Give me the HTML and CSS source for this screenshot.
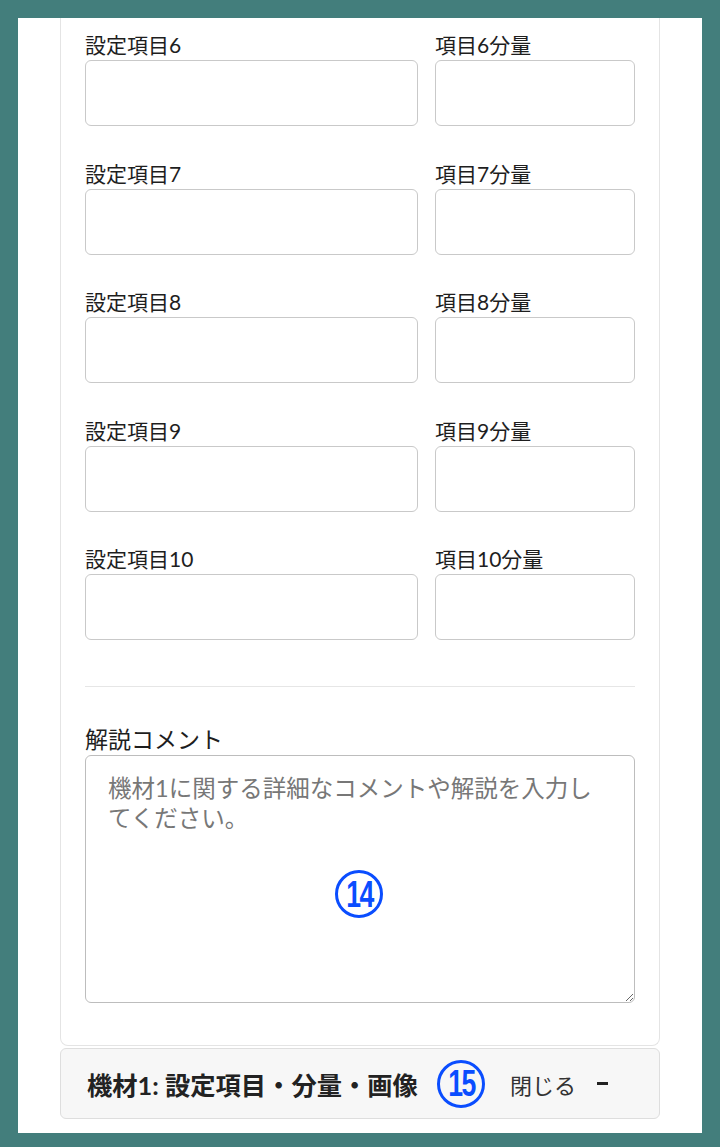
FILE: index.html
```html
<!DOCTYPE html>
<html lang="ja">
<head>
    <meta charset="UTF-8">
    <meta name="viewport" content="width=device-width, initial-scale=1.0">
    <title>機材1: 設定項目・分量・画像</title>
    <link rel="stylesheet" href="styles.css">
</head>
<body>

<div class="frame">
    <div class="panel">
        <div class="fields">
            <div class="field">
                <label>設定項目6</label>
                <input type="text">
            </div>
            <div class="field">
                <label>項目6分量</label>
                <input type="text">
            </div>
            <div class="field">
                <label>設定項目7</label>
                <input type="text">
            </div>
            <div class="field">
                <label>項目7分量</label>
                <input type="text">
            </div>
            <div class="field">
                <label>設定項目8</label>
                <input type="text">
            </div>
            <div class="field">
                <label>項目8分量</label>
                <input type="text">
            </div>
            <div class="field">
                <label>設定項目9</label>
                <input type="text">
            </div>
            <div class="field">
                <label>項目9分量</label>
                <input type="text">
            </div>
            <div class="field">
                <label>設定項目10</label>
                <input type="text">
            </div>
            <div class="field">
                <label>項目10分量</label>
                <input type="text">
            </div>
        </div>

        <hr class="divider">

        <div class="comment">
            <label class="comment-label">解説コメント</label>
            <div class="comment-box">
                <textarea placeholder="機材1に関する詳細なコメントや解説を入力してください。"></textarea>
                <span class="marker marker-14"><span>14</span></span>
            </div>
        </div>
    </div>

    <div class="accordion-header">
        <span class="accordion-title">機材1: 設定項目・分量・画像</span>
        <span class="marker"><span>15</span></span>
        <span class="accordion-toggle">閉じる</span>
        <span class="accordion-icon"></span>
    </div>
</div>

</body>
</html>
```

FILE: styles.css
```css
body {
    margin: 0;
    padding: 18px;
    background-color: #437e7c;
    font-family: Lato, "Noto Sans CJK JP", sans-serif;
    color: #222;
}

.frame {
    background: #fff;
    height: 1115px;
    padding: 0 42px;
    box-sizing: border-box;
    overflow: hidden;
}

.panel {
    border: 1px solid #e4e4e4;
    border-top: none;
    border-radius: 0 0 8px 8px;
    padding: 15px 24px 42px;
}

.fields {
    display: grid;
    grid-template-columns: 333px 200px;
    column-gap: 17px;
    row-gap: 35.5px;
}

.field label {
    display: block;
    font-size: 21px;
    line-height: 24px;
    margin-bottom: 3px;
    color: #1e1e1e;
}

.field input {
    display: block;
    width: 100%;
    height: 66px;
    box-sizing: border-box;
    border: 1px solid #c9c9c9;
    border-radius: 6px;
    background: #fff;
}

.divider {
    border: none;
    border-top: 1px solid #e6e6e6;
    margin: 46px 0 40px;
}

.comment-label {
    display: block;
    font-size: 23px;
    line-height: 24px;
    margin-bottom: 4px;
    color: #1e1e1e;
}

.comment-box {
    position: relative;
}

.comment-box textarea {
    display: block;
    width: 100%;
    height: 248px;
    box-sizing: border-box;
    border: 1px solid #bdbdbd;
    border-radius: 6px;
    padding: 17px 22px;
    font-family: Lato, "Noto Sans CJK JP", sans-serif;
    font-size: 23.5px;
    line-height: 30px;
    resize: vertical;
}

.comment-box textarea::placeholder {
    color: #777;
}

.marker {
    display: inline-flex;
    align-items: center;
    justify-content: center;
    flex: none;
    width: 48px;
    height: 48px;
    box-sizing: border-box;
    border: 3px solid #0a4dff;
    border-radius: 50%;
    color: #0a4dff;
    font-family: "Liberation Sans", sans-serif;
    font-weight: bold;
    font-size: 37px;
    line-height: 1;
}

.marker span {
    display: inline-block;
    transform: scaleX(0.72);
    letter-spacing: -2px;
    margin-right: -2px;
}

.marker-14 {
    position: absolute;
    left: 250px;
    top: 115px;
}

.accordion-header {
    display: flex;
    align-items: center;
    height: 71px;
    box-sizing: border-box;
    margin-top: 2px;
    padding: 0 26px;
    background: #f7f7f7;
    border: 1px solid #dedede;
    border-radius: 6px;
}

.accordion-title {
    font-weight: bold;
    font-size: 25.3px;
    margin-right: 19px;
}

.accordion-toggle {
    font-size: 22px;
    color: #333;
    margin-left: 25px;
}

.accordion-icon {
    width: 11px;
    height: 3px;
    background: #222;
    margin-left: 21px;
}
```
